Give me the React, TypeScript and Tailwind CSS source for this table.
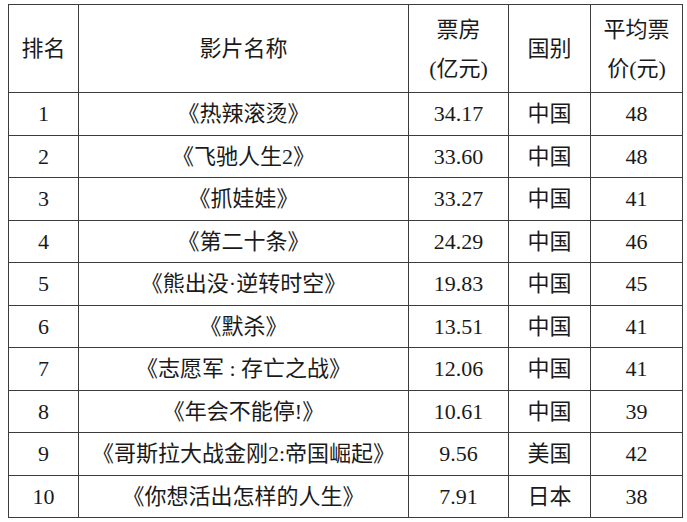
import React from 'react';

type Film = { rank: number; title: string; box: string; country: string; price: number };

const films: Film[] = [
  { rank: 1, title: '《热辣滚烫》', box: '34.17', country: '中国', price: 48 },
  { rank: 2, title: '《飞驰人生2》', box: '33.60', country: '中国', price: 48 },
  { rank: 3, title: '《抓娃娃》', box: '33.27', country: '中国', price: 41 },
  { rank: 4, title: '《第二十条》', box: '24.29', country: '中国', price: 46 },
  { rank: 5, title: '《熊出没·逆转时空》', box: '19.83', country: '中国', price: 45 },
  { rank: 6, title: '《默杀》', box: '13.51', country: '中国', price: 41 },
  { rank: 7, title: '《志愿军 : 存亡之战》', box: '12.06', country: '中国', price: 41 },
  { rank: 8, title: '《年会不能停!》', box: '10.61', country: '中国', price: 39 },
  { rank: 9, title: '《哥斯拉大战金刚2:帝国崛起》', box: '9.56', country: '美国', price: 42 },
  { rank: 10, title: '《你想活出怎样的人生》', box: '7.91', country: '日本', price: 38 },
];

const cell = 'border border-[#3c3c3c] text-center align-middle p-0';

export default function App() {
  return (
    <div
      className="w-[687px] h-[522px] bg-white pl-[8px] pt-[4px] text-[#1a1a1a] text-[22px] leading-[39px]"
      style={{ fontFamily: '"Liberation Serif", "Noto Sans CJK SC", serif' }}
    >
      <table className="table-fixed border-collapse w-[674px]">
        <colgroup>
          <col className="w-[70px]" />
          <col className="w-[330px]" />
          <col className="w-[100px]" />
          <col className="w-[82px]" />
          <col className="w-[92px]" />
        </colgroup>
        <thead>
          <tr className="h-[88px]">
            <th className={`${cell} font-normal`}>排名</th>
            <th className={`${cell} font-normal`}>影片名称</th>
            <th className={`${cell} font-normal`}>
              <div>票房</div>
              <div>(亿元)</div>
            </th>
            <th className={`${cell} font-normal`}>国别</th>
            <th className={`${cell} font-normal`}>
              <div>平均票</div>
              <div>价(元)</div>
            </th>
          </tr>
        </thead>
        <tbody>
          {films.map((f) => (
            <tr key={f.rank} className="h-[42.5px]">
              <td className={cell}>{f.rank}</td>
              <td className={`${cell} whitespace-nowrap`}>{f.title}</td>
              <td className={cell}>{f.box}</td>
              <td className={cell}>{f.country}</td>
              <td className={cell}>{f.price}</td>
            </tr>
          ))}
        </tbody>
      </table>
    </div>
  );
}
